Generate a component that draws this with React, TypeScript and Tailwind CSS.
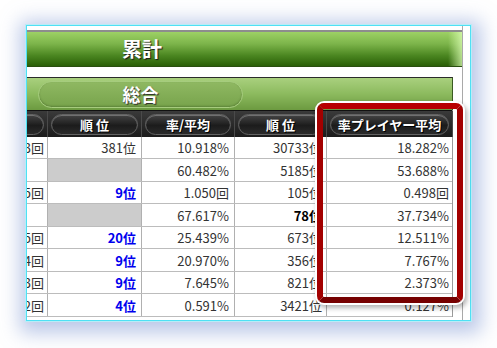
const rows = [
  { c0: '13回', c1: '381位', blue: false, gray: false, c2: '10.918%', c3: '30733位', bold3: false, c4: '18.282%' },
  { c0: '', c1: '', blue: false, gray: true, c2: '60.482%', c3: '5185位', bold3: false, c4: '53.688%' },
  { c0: '15回', c1: '9位', blue: true, gray: false, c2: '1.050回', c3: '105位', bold3: false, c4: '0.498回' },
  { c0: '', c1: '', blue: false, gray: true, c2: '67.617%', c3: '78位', bold3: true, c4: '37.734%' },
  { c0: '15回', c1: '20位', blue: true, gray: false, c2: '25.439%', c3: '673位', bold3: false, c4: '12.511%' },
  { c0: '14回', c1: '9位', blue: true, gray: false, c2: '20.970%', c3: '356位', bold3: false, c4: '7.767%' },
  { c0: '13回', c1: '9位', blue: true, gray: false, c2: '7.645%', c3: '821位', bold3: false, c4: '2.373%' },
  { c0: '12回', c1: '4位', blue: true, gray: false, c2: '0.591%', c3: '3421位', bold3: false, c4: '0.127%' },
];

const font = "font-['Noto_Sans_CJK_JP','Noto_Sans',sans-serif]";

function HeadCell({ label, w, cut }: { label: string; w: string; cut?: boolean }) {
  return (
    <div className={`${w} h-full shrink-0 overflow-hidden border-r border-[#4a4a4a] flex items-center px-[3px]`}>
      <div
        className={`h-[21px] ${cut ? '-ml-[30px] w-[44px]' : 'w-full'} shrink-0 rounded-full border border-[#626262] bg-[linear-gradient(#444,#1c1c1c_55%,#2a2a2a)] shadow-[inset_0_1px_0_#707070] flex items-center justify-center text-white font-bold text-[13px] leading-none [text-shadow:1px_1px_0_#000]`}
      >
        {label}
      </div>
    </div>
  );
}

export default function App() {
  return (
    <div className={`w-[497px] h-[348px] bg-white pt-[25px] pl-[26px] ${font}`}>
      <div className="relative w-[445px] h-[296px] border border-[#4fe0f4] bg-white shadow-[0_0_0_1px_#b9ecf7,2px_4px_18px_8px_rgba(120,145,210,0.5)]">
        <div className="h-full overflow-hidden pr-[7px]">
          <div className="h-full w-[436px] border-r border-[#a9a9a9] pt-[4px]">
            {/* 累計 bar */}
            <div className="h-[37px] border-t-2 border-[#8d8d8d] border-b border-b-[#2a4f10] bg-[linear-gradient(#9dd165,#7cb44a_35%,#4a8520_70%,#2a5f07)] flex">
              <div className="w-[230px] flex items-center justify-center text-white font-bold text-[20px] [text-shadow:1px_1px_1px_#1a1a1a]">
                累計
              </div>
              <div className="flex-1" />
              <div className="w-[14px] bg-[linear-gradient(to_right,rgba(255,255,255,0),rgba(220,255,180,0.75))]" />
            </div>

            {/* 総合 bar */}
            <div className="mt-[10px] w-[426px] h-[33px] border-t border-[#2b2b2b] border-r border-r-[#3a5a22] bg-[linear-gradient(#a9d07e,#8cba5e_50%,#6c9a40)] flex items-center pl-[11px]">
              <div className="w-[205px] h-[27px] rounded-full border border-[#a6cc7e] bg-[linear-gradient(#8fb862,#78a44c)] shadow-[inset_0_-1px_2px_rgba(40,70,20,0.35)] flex items-center justify-center text-white font-bold text-[18px] [text-shadow:1px_1px_1px_#2a2a2a]">
                総合
              </div>
            </div>

            {/* table */}
            <div className="w-[426px] border-r border-[#9a9a9a]">
              <div className="h-[27px] flex bg-[linear-gradient(#3a3a3a,#1b1b1b)] border-t border-[#111]">
                <HeadCell label="" w="w-[21px]" cut />
                <HeadCell label="順 位" w="w-[94px]" />
                <HeadCell label="率/平均" w="w-[93px]" />
                <HeadCell label="順 位" w="w-[92px]" />
                <HeadCell label="率プレイヤー平均" w="w-[126px]" />
              </div>
              {rows.map((r, i) => (
                <div
                  key={i}
                  className={`${i % 2 === 0 ? 'h-[22px]' : 'h-[23px]'} flex border-b border-[#bcbcbc] text-[13px] text-[#333] leading-none`}
                >
                  <div className="w-[21px] shrink-0 overflow-hidden flex items-center justify-end pr-[3px] border-r border-[#b0b0b0] whitespace-nowrap">
                    <span className="shrink-0">{r.c0}</span>
                  </div>
                  <div
                    className={`w-[94px] shrink-0 flex items-center justify-end pr-[5px] border-r border-[#b0b0b0] ${r.gray ? 'bg-[#cccccc]' : ''} ${r.blue ? 'text-[#0000ee] font-bold' : ''}`}
                  >
                    {r.c1}
                  </div>
                  <div className="w-[93px] shrink-0 flex items-center justify-end pr-[5px] border-r border-[#b0b0b0]">
                    {r.c2}
                  </div>
                  <div className={`w-[92px] shrink-0 flex items-center justify-end pr-[4px] border-r border-[#b0b0b0] ${r.bold3 ? 'font-bold text-black' : ''}`}>
                    {r.c3}
                  </div>
                  <div className="w-[126px] shrink-0 flex items-center justify-end pr-[4px]">{r.c4}</div>
                </div>
              ))}
            </div>
          </div>
        </div>

        {/* highlight frame */}
        <div className="absolute left-[290px] top-[77px] w-[146px] h-[200px] rounded-[7px] border-[6px] border-t-[#b80000] border-x-[#a30000] border-b-[#760000] shadow-[0_0_0_2px_#ffffff,2px_3px_5px_2px_rgba(0,0,0,0.3)] pointer-events-none" />
      </div>
    </div>
  );
}
